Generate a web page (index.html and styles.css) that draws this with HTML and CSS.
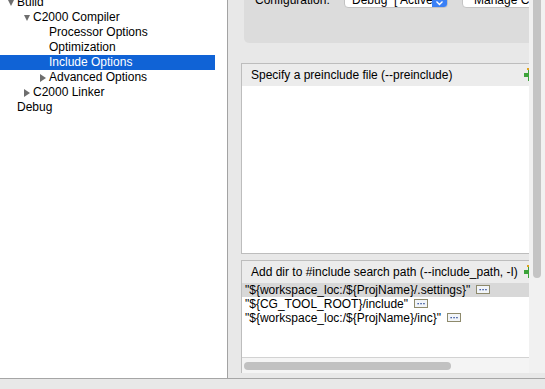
FILE: index.html
```html
<!DOCTYPE html>
<html>
<head>
<meta charset="utf-8">
<link rel="stylesheet" href="styles.css">
</head>
<body>
<div class="window">
  <div class="main">
    <div class="tree">
      <div class="tree-list">
        <div class="row l0"><span class="tw down"></span>Build</div>
        <div class="row l1"><span class="tw down"></span>C2000 Compiler</div>
        <div class="row l2"><span class="tw"></span>Processor Options</div>
        <div class="row l2"><span class="tw"></span>Optimization</div>
        <div class="row l2 sel"><span class="tw"></span>Include Options</div>
        <div class="row l2"><span class="tw right"></span>Advanced Options</div>
        <div class="row l1"><span class="tw right"></span>C2000 Linker</div>
        <div class="row l0"><span class="tw"></span>Debug</div>
      </div>
    </div>
    <div class="pane">
      <div class="content">
        <div class="config">
          <span class="config-label">Configuration:</span>
          <div class="combo">
            <span class="combo-text">Debug&nbsp;&nbsp;[ Active ]</span>
            <span class="combo-arrow">
              <svg width="15" height="19" viewBox="0 0 15 19"><path d="M4.5 12.5 L7.5 15.5 L10.5 12.5" fill="none" stroke="#fff" stroke-width="1.4"/></svg>
            </span>
          </div>
          <div class="btn">Manage Configurations...</div>
        </div>

        <div class="section s1">
          <div class="sec-head">
            <span>Specify a preinclude file (--preinclude)</span>
            <svg class="add-icon" width="12" height="14" viewBox="0 0 12 14"><rect x="0" y="5" width="12" height="4" fill="#3ca33a"/><rect x="4" y="1" width="4" height="12" fill="#3ca33a"/><rect x="3" y="0" width="2" height="2" fill="#e0a21c"/></svg>
          </div>
          <div class="sec-body"></div>
        </div>

        <div class="section s2">
          <div class="sec-head">
            <span>Add dir to #include search path (--include_path, -I)</span>
            <svg class="add-icon" width="12" height="14" viewBox="0 0 12 14"><rect x="0" y="5" width="12" height="4" fill="#3ca33a"/><rect x="4" y="1" width="4" height="12" fill="#3ca33a"/><rect x="3" y="0" width="2" height="2" fill="#e0a21c"/></svg>
          </div>
          <div class="list">
            <div class="item hl"><span>"${workspace_loc:/${ProjName}/.settings}"</span>
              <svg class="dots" width="14" height="9" viewBox="0 0 14 9"><rect x="0.5" y="0.5" width="13" height="8" fill="#f2f5f9" stroke="#8e8a6c"/><rect x="3.5" y="4" width="1.3" height="1.3" fill="#1f3f8f"/><rect x="6.4" y="4" width="1.3" height="1.3" fill="#1f3f8f"/><rect x="9.3" y="4" width="1.3" height="1.3" fill="#1f3f8f"/></svg>
            </div>
            <div class="item"><span>"${CG_TOOL_ROOT}/include"</span>
              <svg class="dots" width="14" height="9" viewBox="0 0 14 9"><rect x="0.5" y="0.5" width="13" height="8" fill="#f2f5f9" stroke="#8e8a6c"/><rect x="3.5" y="4" width="1.3" height="1.3" fill="#1f3f8f"/><rect x="6.4" y="4" width="1.3" height="1.3" fill="#1f3f8f"/><rect x="9.3" y="4" width="1.3" height="1.3" fill="#1f3f8f"/></svg>
            </div>
            <div class="item"><span>"${workspace_loc:/${ProjName}/inc}"</span>
              <svg class="dots" width="14" height="9" viewBox="0 0 14 9"><rect x="0.5" y="0.5" width="13" height="8" fill="#f2f5f9" stroke="#8e8a6c"/><rect x="3.5" y="4" width="1.3" height="1.3" fill="#1f3f8f"/><rect x="6.4" y="4" width="1.3" height="1.3" fill="#1f3f8f"/><rect x="9.3" y="4" width="1.3" height="1.3" fill="#1f3f8f"/></svg>
            </div>
          </div>
          <div class="hscroll"><div class="hthumb"></div></div>
        </div>
      </div>
      <div class="vscroll"><div class="vthumb"></div></div>
    </div>
  </div>
  <div class="footer"></div>
</div>
</body>
</html>
```

FILE: styles.css
```css
* { box-sizing: border-box; }
html, body {
  margin: 0;
  padding: 0;
  width: 545px;
  height: 389px;
  overflow: hidden;
  background: #e8e8e8;
  font-family: "Liberation Sans", Arial, sans-serif;
  font-size: 12px;
  color: #000;
}
.window {
  width: 545px;
  height: 389px;
  display: flex;
  flex-direction: column;
}
.main {
  height: 379px;
  display: flex;
  border-bottom: 1px solid #a6a6a6;
}
.footer {
  height: 10px;
  background: #e8e8e8;
}

/* tree */
.tree {
  width: 228px;
  background: #fff;
  border-right: 1px solid #a3a3a3;
  overflow: hidden;
}
.tree-list {
  margin-top: -5px;
}
.row {
  width: 215px;
  height: 15px;
  line-height: 15px;
  display: flex;
  align-items: center;
  white-space: nowrap;
}
.row.l0 { padding-left: 8px; }
.row.l1 { padding-left: 24px; }
.row.l2 { padding-left: 40px; }
.row.sel {
  background: #1063d6;
  color: #fff;
}
.tw {
  width: 9px;
  height: 15px;
  flex: none;
  position: relative;
}
.tw.down::before {
  content: "";
  position: absolute;
  left: 0;
  top: 5px;
  border-left: 3.5px solid transparent;
  border-right: 3.5px solid transparent;
  border-top: 6px solid #6e6e6e;
}
.tw.right::before {
  content: "";
  position: absolute;
  left: 0;
  top: 4px;
  border-top: 4px solid transparent;
  border-bottom: 4px solid transparent;
  border-left: 6px solid #6e6e6e;
}

/* right pane */
.pane {
  flex: 1;
  display: flex;
  background: #e8e8e8;
}
.content {
  width: 301px;
  overflow: hidden;
  padding-left: 13px;
  display: flex;
  flex-direction: column;
}
.config {
  margin-top: -22px;
  margin-left: 3px;
  width: 300px;
  height: 65px;
  flex: none;
  background: #dcdcdc;
  border-radius: 5px;
  padding: 10px 0 0 11px;
  display: flex;
  align-items: flex-start;
}
.config-label {
  line-height: 14px;
  margin-top: 5px;
  width: 89px;
  flex: none;
}
.combo {
  width: 104px;
  height: 20px;
  flex: none;
  background: #fff;
  border: 1px solid #c2c2c2;
  border-radius: 4px;
  display: flex;
  overflow: hidden;
}
.combo-text {
  flex: 1;
  padding-left: 7px;
  line-height: 14px;
  margin-top: 4px;
  white-space: nowrap;
  overflow: hidden;
}
.combo-arrow {
  width: 15px;
  flex: none;
  background: #3a80f6;
  display: flex;
}
.btn {
  margin-left: 14px;
  height: 20px;
  flex: none;
  background: #fff;
  border: 1px solid #c4c4c4;
  border-radius: 4px;
  padding: 4px 11px 0 11px;
  line-height: 14px;
  white-space: nowrap;
}

.section {
  width: 300px;
  flex: none;
  border: 1px solid #bdbdbd;
  background: #fff;
}
.s1 {
  margin-top: 20px;
}
.s2 {
  margin-top: 6px;
  border-bottom: none;
  background: #f4f4f4;
}
.sec-head {
  height: 22px;
  line-height: 22px;
  background: #ececec;
  padding: 0 4px 0 9px;
  display: flex;
  align-items: center;
  white-space: nowrap;
}
.add-icon {
  margin-left: auto;
  flex: none;
}
.sec-body {
  height: 167px;
  background: #fff;
}
.list {
  height: 75px;
  background: #fff;
  border-bottom: 1px solid #d2d2d2;
}
.item {
  height: 14px;
  line-height: 14px;
  padding-left: 3px;
  display: flex;
  align-items: center;
  gap: 6px;
  white-space: nowrap;
}
.item.hl {
  background: #d8d8d8;
}
.dots {
  flex: none;
  margin-top: -1px;
}
.hscroll {
  height: 15px;
  padding: 4px 0 0 2px;
  background: #f4f4f4;
}
.hthumb {
  width: 207px;
  height: 8px;
  border-radius: 4px;
  background: #c1c1c1;
}

.vscroll {
  width: 16px;
  height: 373px;
  background: #f1f1f1;
  padding-left: 4px;
  overflow: hidden;
}
.vthumb {
  width: 8px;
  height: 288px;
  margin-top: -10px;
  border-radius: 4px;
  background: #c4c4c4;
}
```
